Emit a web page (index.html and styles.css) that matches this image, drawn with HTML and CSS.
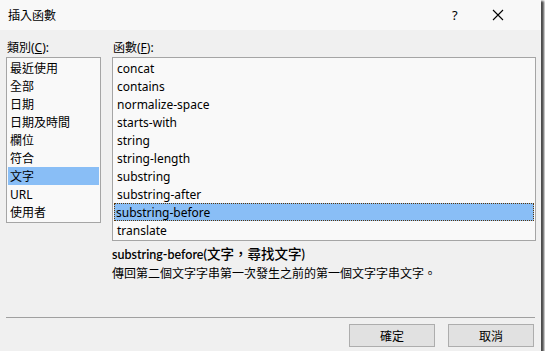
FILE: index.html
```html
<!DOCTYPE html>
<html lang="zh-Hant">
<head>
<meta charset="utf-8">
<link rel="stylesheet" href="styles.css">
</head>
<body>
<div class="dialog">
  <div class="titlebar">
    <span class="title">插入函數</span>
    <span class="help">?</span>
    <span class="close"><svg width="12" height="12" viewBox="0 0 12 12"><path d="M1 1L11 11M11 1L1 11" stroke="#000" stroke-width="1.1" fill="none"/></svg></span>
  </div>
  <div class="content">
    <div class="columns">
      <div class="col col-left">
        <div class="label">類別(<u>C</u>):</div>
        <ul class="list list-left">
          <li>最近使用</li>
          <li>全部</li>
          <li>日期</li>
          <li>日期及時間</li>
          <li>欄位</li>
          <li>符合</li>
          <li class="sel">文字</li>
          <li>URL</li>
          <li>使用者</li>
        </ul>
      </div>
      <div class="col col-right">
        <div class="label">函數(<u>F</u>):</div>
        <ul class="list list-right">
          <li>concat</li>
          <li>contains</li>
          <li>normalize-space</li>
          <li>starts-with</li>
          <li>string</li>
          <li>string-length</li>
          <li>substring</li>
          <li>substring-after</li>
          <li class="sel focus">substring-before</li>
          <li>translate</li>
        </ul>
        <div class="sig">substring-before(<span class="cjk">文字，尋找文字</span>)</div>
        <div class="desc">傳回第二個文字字串第一次發生之前的第一個文字字串文字。</div>
      </div>
    </div>
    <div class="sep"></div>
    <div class="buttons">
      <button class="btn">確定</button>
      <button class="btn">取消</button>
    </div>
  </div>
</div>
</body>
</html>
```
FILE: styles.css
```css
html, body {
  margin: 0;
  padding: 0;
  background: #ffffff;
}
body {
  font-family: "Noto Sans", "Noto Sans CJK TC", sans-serif;
  font-size: 12px;
  color: #000;
}
.dialog {
  width: 541px;
  height: 351px;
  background: #f0f0f0;
  box-shadow: 2px 2px 2px 1px rgba(0,0,0,0.7);
  display: flex;
  flex-direction: column;
}
.titlebar {
  height: 30px;
  background: #f8f8f8;
  display: flex;
  align-items: center;
  padding-left: 8px;
  box-sizing: border-box;
}
.title {
  flex: 1;
  font-size: 12px;
}
.help {
  width: 14px;
  font-size: 13px;
  margin-right: 26px;
}
.close {
  display: flex;
  margin-right: 37px;
}
.content {
  padding: 9px 5px 0 6px;
  display: flex;
  flex-direction: column;
}
.columns {
  display: flex;
  gap: 11px;
}
.col-left { width: 95px; }
.col-right { width: 424px; }
.label {
  height: 18px;
  line-height: 18px;
  padding-left: 1px;
}
.label u { text-decoration: underline; }
.list {
  list-style: none;
  margin: 0;
  padding: 1px;
  border: 1px solid #a5a5a5;
  background: #f9f9f9;
  box-sizing: border-box;
}
.list-left { height: 166px; }
.list-right { height: 184px; }
.list li {
  height: 18px;
  line-height: 16px;
  padding: 2px 0 0 3px;
  box-sizing: border-box;
  white-space: nowrap;
}
.list-left li { padding-left: 2px; }
.list li.sel { background: #89bef6; }
.list li.focus {
  outline: 1px dotted #5a3508;
  outline-offset: -1px;
  padding-left: 2px;
}
.sig {
  margin-top: 3px;
  font-family: Lato, "Noto Sans CJK TC", sans-serif;
  font-size: 12.5px;
  font-weight: 600;
  line-height: 18px;
}
.sig .cjk {
  font-family: "Noto Sans CJK TC", sans-serif;
  font-size: 13.5px;
  font-weight: 500;
}
.desc {
  font-size: 12px;
  line-height: 18px;
  margin-top: 1px;
}
.sep {
  margin-top: 34px;
  height: 1px;
  background: #a0a0a0;
  width: 529px;
}
.buttons {
  display: flex;
  justify-content: flex-end;
  gap: 13px;
  margin-top: 6px;
  padding-right: 2px;
}
.btn {
  width: 86px;
  height: 23px;
  background: #e1e1e1;
  border: 1px solid #adadad;
  font-family: "Noto Sans CJK TC", sans-serif;
  font-size: 12px;
  color: #000;
  padding: 0;
  margin: 0;
}
```
